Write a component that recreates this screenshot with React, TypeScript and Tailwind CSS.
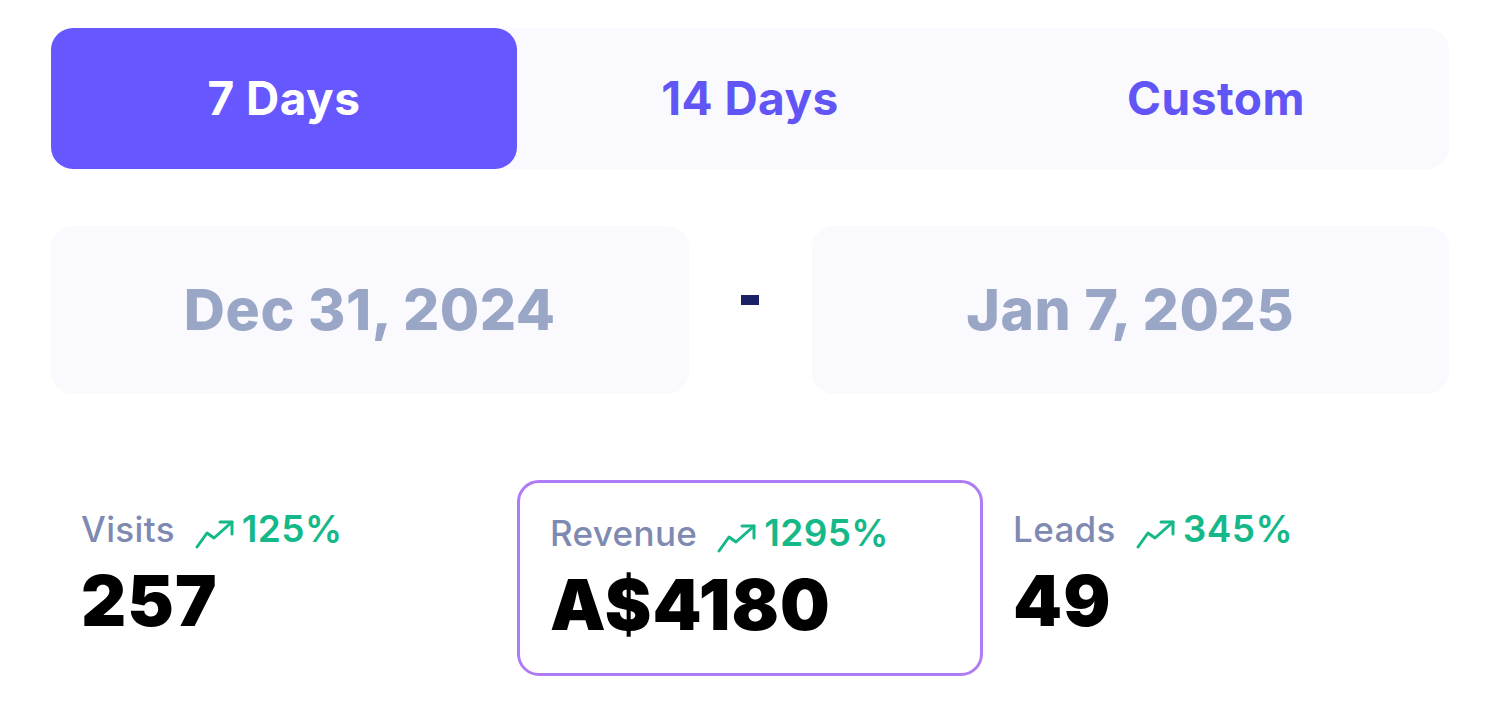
const stats = [
  { label: "Visits", change: "125%", value: "257", active: false },
  { label: "Revenue", change: "1295%", value: "A$4180", active: true },
  { label: "Leads", change: "345%", value: "49", active: false },
];

const tabs = ["7 Days", "14 Days", "Custom"];

function TrendIcon() {
  return (
    <svg
      width="42"
      height="30"
      viewBox="0 0 42 30"
      fill="none"
      stroke="currentColor"
      strokeWidth="3"
      strokeLinecap="round"
      strokeLinejoin="round"
      className="mr-[5px] mt-[10px]"
    >
      <path d="M2 28 12 14 19 19 37 3" />
      <path d="M25 3h12v12" />
    </svg>
  );
}

export default function App() {
  return (
    <div className="min-h-[726px] bg-white px-[51px] pt-[28px] font-['Inter',sans-serif]">
      <div className="grid h-[141px] grid-cols-3 rounded-[22px] bg-[#f9f9fe]">
        {tabs.map((tab, i) => (
          <button
            key={tab}
            className={
              i === 0
                ? "rounded-[22px] bg-[#6657ff] text-[46px] font-bold tracking-[0.01em] text-white"
                : "text-[46px] font-bold tracking-[0.01em] text-[#6155f5]"
            }
          >
            {tab}
          </button>
        ))}
      </div>

      <div className="mt-[57px] flex items-center">
        <div className="flex h-[168px] flex-1 items-center justify-center rounded-[22px] bg-[#f9f9fe] text-[57px] font-extrabold tracking-[0.01em] text-[#9aa6c6]">
          Dec 31, 2024
        </div>
        <div className="flex w-[123px] justify-center pb-[20px]">
          <div className="h-[10px] w-[18px] bg-[#1a2166]" />
        </div>
        <div className="flex h-[168px] flex-1 items-center justify-center rounded-[22px] bg-[#f9f9fe] text-[57px] font-extrabold tracking-[0.01em] text-[#9aa6c6]">
          Jan 7, 2025
        </div>
      </div>

      <div className="mt-[86px] grid grid-cols-3">
        {stats.map((s) => (
          <div
            key={s.label}
            className={
              s.active
                ? "h-[196px] rounded-[22px] border-[3px] border-[#b07cf5] px-[30px] pt-[28px]"
                : "border-[3px] border-transparent px-[27px] pt-[24px]"
            }
          >
            <div className="flex items-center leading-[44px]">
              <span className="text-[35px] font-medium tracking-[0.01em] text-[#7f8ab2]">{s.label}</span>
              <span className="ml-[20px] flex items-center text-[37px] font-semibold tracking-[0.01em] text-[#14b889]">
                <TrendIcon />
                {s.change}
              </span>
            </div>
            <div className="mt-[12px] text-[70px] leading-[76px] font-black tracking-[0.015em] text-black">
              {s.value}
            </div>
          </div>
        ))}
      </div>
    </div>
  );
}
